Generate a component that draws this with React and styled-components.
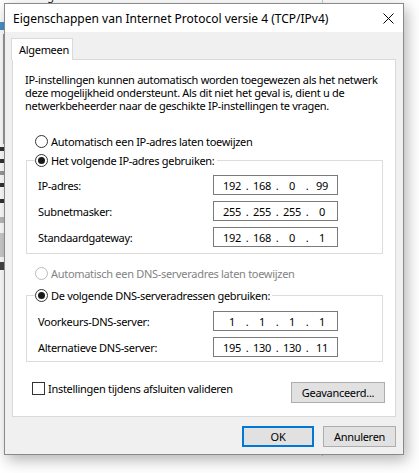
import React from "react";
import styled, { createGlobalStyle } from "styled-components";

const GlobalStyle = createGlobalStyle`
  html, body { margin: 0; padding: 0; background: #ffffff; }
  body {
    font-family: "Noto Sans", "Liberation Sans", Arial, sans-serif;
    font-size: 11px;
    letter-spacing: -0.3px;
    color: #000;
  }
  * { box-sizing: border-box; }
`;

const Desktop = styled.div`
  position: relative;
  width: 419px;
  height: 473px;
  overflow: hidden;
  padding: 3px 0 0 4px;
  background: #ffffff;
`;

const BackWindow = styled.div`
  position: absolute;
  left: -20px;
  top: -14px;
  width: 343px;
  height: 470px;
  background: #fff;
  border-right: 1px solid #c8c8c8;
  display: flex;
  flex-direction: column;
  padding-left: 20px;
`;

const BackTitle = styled.div`
  font-size: 11px;
  line-height: 14px;
  margin-top: 3px;
  white-space: nowrap;
  color: #222;
`;

const BackChip = styled.div`
  width: 4px;
  height: ${(p) => p.$h}px;
  margin-top: ${(p) => p.$mt}px;
  background: ${(p) => p.$bg};
  border-right: ${(p) => (p.$line ? "1px solid #999" : "none")};
`;

const Dialog = styled.div`
  position: relative;
  z-index: 1;
  width: 400px;
  border: 1px solid #8a8a8a;
  background: #f0f0f0;
  box-shadow: 3px 5px 14px rgba(0, 0, 0, 0.3);
`;

const TitleBar = styled.div`
  height: 28px;
  background: #fff;
  display: flex;
  align-items: center;
  justify-content: space-between;
  padding: 0 9px 0 8px;
`;

const TitleText = styled.span`
  font-size: 12px;
  letter-spacing: 0;
  white-space: nowrap;
`;

const Body = styled.div`
  padding: 6px 7px 7px 7px;
`;

const Tabs = styled.div`
  display: flex;
`;

const Tab = styled.div`
  position: relative;
  z-index: 1;
  margin-left: -1px;
  margin-bottom: -1px;
  width: 62px;
  height: 22px;
  padding-left: 7px;
  display: flex;
  align-items: center;
  background: #fff;
  border: 1px solid #d9d9d9;
  border-bottom: none;
`;

const Panel = styled.div`
  background: #fff;
  border: 1px solid #d9d9d9;
  padding: 13px 12px 13px 13px;
  display: flex;
  flex-direction: column;
`;

const Description = styled.p`
  margin: 0 0 0 -1px;
  line-height: 13px;
  white-space: nowrap;
`;

const RadioRow = styled.label`
  display: flex;
  align-items: center;
  gap: 3px;
  height: 16px;
  margin-top: ${(p) => p.$mt || 0}px;
  margin-left: ${(p) => p.$ml || 0}px;
  color: ${(p) => (p.$disabled ? "#838383" : "#000")};
  white-space: nowrap;
`;

const RadioCircle = styled.span`
  width: 13px;
  height: 13px;
  border-radius: 50%;
  border: 1px solid ${(p) => (p.$disabled ? "#bcbcbc" : "#333")};
  background: #fff;
  display: flex;
  align-items: center;
  justify-content: center;
  flex: none;
  &::after {
    content: "";
    display: ${(p) => (p.$checked ? "block" : "none")};
    width: 7px;
    height: 7px;
    border-radius: 50%;
    background: #1a1a1a;
  }
`;

const Group = styled.fieldset`
  margin: ${(p) => p.$mt}px 0 0 0;
  padding: ${(p) => p.$pt}px 0 ${(p) => p.$pb}px 8px;
  border: 1px solid #dcdcdc;
  min-width: 0;
`;

const Legend = styled.legend`
  padding: 0 2px 0 0;
`;

const FieldGrid = styled.div`
  display: grid;
  grid-template-columns: 175px 125px;
  grid-auto-rows: 20px;
  row-gap: 6px;
  margin-left: 3px;
  align-items: center;
`;

const FieldLabel = styled.span`
  white-space: nowrap;
`;

const IPBox = styled.div`
  width: 125px;
  height: 20px;
  border: 1px solid #7a7a7a;
  background: #fff;
  display: flex;
  align-items: center;
  padding-left: 6px;
`;

const Octet = styled.span`
  width: 24px;
  text-align: center;
`;

const Dot = styled.span`
  width: 6px;
  text-align: center;
`;

const BottomRow = styled.div`
  display: flex;
  justify-content: space-between;
  align-items: flex-start;
  margin: 20px -2px 0 6px;
`;

const CheckLabel = styled.label`
  display: flex;
  align-items: center;
  gap: 3px;
  height: 13px;
  white-space: nowrap;
`;

const CheckBox = styled.span`
  width: 13px;
  height: 13px;
  border: 1px solid #333;
  background: #fff;
  flex: none;
`;

const Button = styled.button`
  font: inherit;
  letter-spacing: inherit;
  color: #000;
  width: ${(p) => p.$w}px;
  height: 21px;
  padding: 0;
  background: #e1e1e1;
  border: ${(p) => (p.$default ? "2px solid #0078d7" : "1px solid #adadad")};
  display: flex;
  align-items: center;
  justify-content: center;
`;

const ButtonRow = styled.div`
  display: flex;
  justify-content: flex-end;
  gap: 9px;
  margin-top: 9px;
`;

function CloseIcon() {
  return (
    <svg width="11" height="11" viewBox="0 0 11 11">
      <path d="M0.5 0.5 L10.5 10.5 M10.5 0.5 L0.5 10.5" stroke="#000" strokeWidth="1" fill="none" />
    </svg>
  );
}

function IPField({ value }) {
  const parts = value.split(".");
  return (
    <IPBox>
      {parts.map((p, i) => (
        <React.Fragment key={i}>
          <Octet>{p}</Octet>
          {i < 3 && <Dot>.</Dot>}
        </React.Fragment>
      ))}
    </IPBox>
  );
}

export default function App() {
  return (
    <>
      <GlobalStyle />
      <Desktop>
        <BackWindow>
          <BackTitle>Verbinding maken via:</BackTitle>
          <BackChip $h={8} $mt={19} $bg="#4a90c8" />
          <BackChip $h={110} $mt={4} $bg="#fff" $line />
          <BackChip $h={4} $mt={3} $bg="#333" />
          <BackChip $h={4} $mt={8} $bg="#333" />
          <BackChip $h={4} $mt={8} $bg="#999" />
          <BackChip $h={4} $mt={8} $bg="#333" />
          <BackChip $h={4} $mt={12} $bg="#333" />
          <BackChip $h={6} $mt={14} $bg="#bbb" />
          <BackChip $h={24} $mt={10} $bg="#cccccc" />
          <BackChip $h={8} $mt={5} $bg="#444" />
        </BackWindow>
        <Dialog>
          <TitleBar>
            <TitleText>Eigenschappen van Internet Protocol versie 4 (TCP/IPv4)</TitleText>
            <CloseIcon />
          </TitleBar>
          <Body>
            <Tabs>
              <Tab>Algemeen</Tab>
            </Tabs>
            <Panel>
              <Description>
                IP-instellingen kunnen automatisch worden toegewezen als het netwerk
                <br />
                deze mogelijkheid ondersteunt. Als dit niet het geval is, dient u de
                <br />
                netwerkbeheerder naar de geschikte IP-instellingen te vragen.
              </Description>
              <RadioRow $mt={21} $ml={9}>
                <RadioCircle />
                Automatisch een IP-adres laten toewijzen
              </RadioRow>
              <Group $mt={3} $pt={7} $pb={6}>
                <Legend>
                  <RadioRow>
                    <RadioCircle $checked />
                    Het volgende IP-adres gebruiken:
                  </RadioRow>
                </Legend>
                <FieldGrid>
                  <FieldLabel>IP-adres:</FieldLabel>
                  <IPField value="192.168.0.99" />
                  <FieldLabel>Subnetmasker:</FieldLabel>
                  <IPField value="255.255.255.0" />
                  <FieldLabel>Standaardgateway:</FieldLabel>
                  <IPField value="192.168.0.1" />
                </FieldGrid>
              </Group>
              <RadioRow $mt={11} $ml={9} $disabled>
                <RadioCircle $disabled />
                Automatisch een DNS-serveradres laten toewijzen
              </RadioRow>
              <Group $mt={6} $pt={8} $pb={4}>
                <Legend>
                  <RadioRow>
                    <RadioCircle $checked />
                    De volgende DNS-serveradressen gebruiken:
                  </RadioRow>
                </Legend>
                <FieldGrid>
                  <FieldLabel>Voorkeurs-DNS-server:</FieldLabel>
                  <IPField value="1.1.1.1" />
                  <FieldLabel>Alternatieve DNS-server:</FieldLabel>
                  <IPField value="195.130.130.11" />
                </FieldGrid>
              </Group>
              <BottomRow>
                <CheckLabel>
                  <CheckBox />
                  Instellingen tijdens afsluiten valideren
                </CheckLabel>
                <Button $w={94}>Geavanceerd...</Button>
              </BottomRow>
            </Panel>
            <ButtonRow>
              <Button $w={72} $default>OK</Button>
              <Button $w={73}>Annuleren</Button>
            </ButtonRow>
          </Body>
        </Dialog>
      </Desktop>
    </>
  );
}
